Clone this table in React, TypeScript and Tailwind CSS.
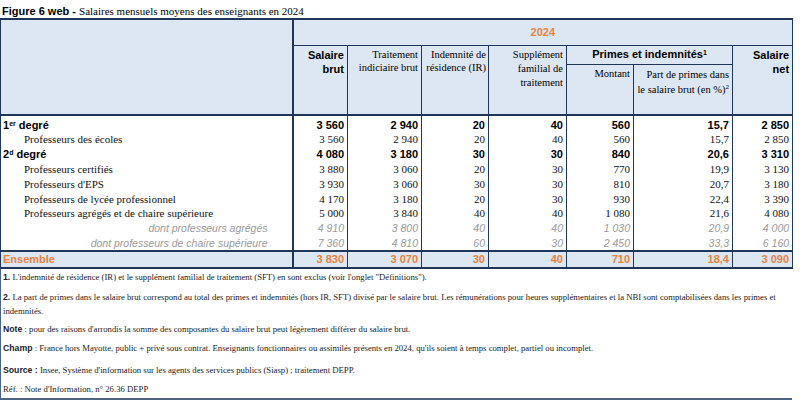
import React from 'react'

type Row = {
  label: React.ReactNode
  kind: 'group' | 'item' | 'dont'
  values: string[]
}

const rows: Row[] = [
  { label: <>1<sup className="text-[7px]">er</sup> degré</>, kind: 'group', values: ['3 560', '2 940', '20', '40', '560', '15,7', '2 850'] },
  { label: 'Professeurs des écoles', kind: 'item', values: ['3 560', '2 940', '20', '40', '560', '15,7', '2 850'] },
  { label: <>2<sup className="text-[7px]">d</sup> degré</>, kind: 'group', values: ['4 080', '3 180', '30', '30', '840', '20,6', '3 310'] },
  { label: 'Professeurs certifiés', kind: 'item', values: ['3 880', '3 060', '20', '30', '770', '19,9', '3 130'] },
  { label: "Professeurs d'EPS", kind: 'item', values: ['3 930', '3 060', '30', '30', '810', '20,7', '3 180'] },
  { label: 'Professeurs de lycée professionnel', kind: 'item', values: ['4 170', '3 180', '20', '30', '930', '22,4', '3 390'] },
  { label: 'Professeurs agrégés et de chaire supérieure', kind: 'item', values: ['5 000', '3 840', '40', '40', '1 080', '21,6', '4 080'] },
  { label: 'dont professeurs agrégés', kind: 'dont', values: ['4 910', '3 800', '40', '40', '1 030', '20,9', '4 000'] },
  { label: 'dont professeurs de chaire supérieure', kind: 'dont', values: ['7 360', '4 810', '60', '30', '2 450', '33,3', '6 160'] },
]

const total = ['3 830', '3 070', '30', '40', '710', '18,4', '3 090']

const arial = 'font-["Liberation_Sans",Arial,sans-serif]'
const times = 'font-["Liberation_Serif","Times_New_Roman",serif]'

function cellStyle(kind: Row['kind']) {
  if (kind === 'group') return `${arial} font-bold text-[11px] text-black`
  if (kind === 'dont') return `${arial} italic text-[10.5px] text-[#9a9a9a]`
  return `${times} text-[11px] text-[#111]`
}

export default function App() {
  return (
    <div className="w-[800px] h-[400px] bg-white overflow-hidden">
      <div className="h-[18px] pl-[2px] pt-[3px] leading-[13px] whitespace-nowrap">
        <span className={`${arial} font-bold text-[11px]`}>Figure 6 web - </span>
        <span className={`${times} text-[11px]`}>Salaires mensuels moyens des enseignants en 2024</span>
      </div>

      <table className="w-[792px] table-fixed border-collapse">
        <colgroup>
          <col className="w-[292px]" />
          <col className="w-[55px]" />
          <col className="w-[74px]" />
          <col className="w-[67px]" />
          <col className="w-[78px]" />
          <col className="w-[67px]" />
          <col className="w-[99px]" />
          <col className="w-[60px]" />
        </colgroup>
        <thead className="bg-[#dde7f3]">
          <tr className="h-[26px]">
            <th rowSpan={3} className="border-t-2 border-b-2 border-l border-r-2 border-[#1f3659]" />
            <th colSpan={7} className={`${arial} border-t-2 border-r border-b-[1.5px] border-[#1f3659] text-[11px] font-bold text-[#e8823c] text-center`}>
              2024
            </th>
          </tr>
          <tr className="h-[19px]">
            <th rowSpan={2} className={`${arial} align-top text-right pr-[3px] pt-[2px] text-[11px] leading-[14px] font-bold border-r border-b-2 border-[#1f3659]`}>
              Salaire<br />brut
            </th>
            <th rowSpan={2} className={`${times} align-top text-right pr-[3px] pt-[2px] text-[10.5px] leading-[13.5px] font-normal border-r border-b-2 border-[#1f3659]`}>
              Traitement<br />indiciaire brut
            </th>
            <th rowSpan={2} className={`${times} align-top text-right pr-[2px] pt-[2px] text-[10.5px] leading-[13.5px] font-normal border-r border-b-2 border-[#1f3659]`}>
              Indemnité de<br />résidence (IR)
            </th>
            <th rowSpan={2} className={`${times} align-top text-right pr-[3px] pt-[2px] text-[10.5px] leading-[14px] font-normal border-r border-b-2 border-[#1f3659]`}>
              Supplément<br />familial de<br />traitement
            </th>
            <th colSpan={2} className={`${arial} text-center text-[11px] font-bold border-r border-b border-[#1f3659] leading-[14px] pb-[1px]`}>
              Primes et indemnités<sup className="text-[7px]">1</sup>
            </th>
            <th rowSpan={2} className={`${arial} align-top text-right pr-[3px] pt-[2px] text-[11px] leading-[14px] font-bold border-r border-b-2 border-[#1f3659]`}>
              Salaire<br />net
            </th>
          </tr>
          <tr className="h-[51px]">
            <th className={`${times} align-top text-right pr-[3px] pt-[2px] text-[10.5px] leading-[14px] font-normal border-r border-b-2 border-[#1f3659]`}>
              Montant
            </th>
            <th className={`${times} align-top text-right pr-[3px] pt-[2px] text-[10.5px] leading-[15px] font-normal border-r border-b-2 border-[#1f3659]`}>
              Part de primes dans<br />le salaire brut (en %)<sup className="text-[7px]">2</sup>
            </th>
          </tr>
        </thead>
        <tbody>
          {rows.map((r, i) => (
            <tr key={i} className={i === 0 ? 'h-[16px]' : 'h-[14.8px]'}>
              <td
                className={`${cellStyle(r.kind)} leading-[14px] whitespace-nowrap border-l border-r-2 border-[#1f3659] ${
                  r.kind === 'group' ? 'pl-[2px] text-left' : r.kind === 'item' ? 'pl-[23px] text-left' : 'text-right pr-[24px]'
                } ${i === 0 ? 'pt-[2px]' : ''}`}
              >
                {r.label}
              </td>
              {r.values.map((v, j) => (
                <td
                  key={j}
                  className={`${cellStyle(r.kind)} leading-[14px] text-right pr-[3px] border-r border-[#1f3659] ${i === 0 ? 'pt-[2px]' : ''}`}
                >
                  {v}
                </td>
              ))}
            </tr>
          ))}
          <tr className="h-[17px] bg-[#dde7f3]">
            <td className={`${arial} font-bold text-[11px] text-[#e8823c] pl-[2px] border-t-2 border-b-2 border-l border-r-2 border-[#1f3659] leading-[14px]`}>
              Ensemble
            </td>
            {total.map((v, j) => (
              <td
                key={j}
                className={`${arial} font-bold text-[11px] text-[#e8823c] text-right pr-[3px] border-t-2 border-b-2 border-r border-[#1f3659] leading-[14px]`}
              >
                {v}
              </td>
            ))}
          </tr>
        </tbody>
      </table>

      <div className={`${times} w-[792px] h-[132px] border-l border-b-[3px] border-[#4a6585] text-[8.7px] leading-[13px] text-[#222] pl-[2px] pt-[2px]`}>
        <p className="mb-[6px]">
          <span className={`${arial} font-bold`}>1.</span> L'indemnité de résidence (IR) et le supplément familial de traitement (SFT) en sont exclus (voir l'onglet "Définitions").
        </p>
        <p className="mb-[5px] leading-[14px]">
          <span className={`${arial} font-bold`}>2.</span> La part de primes dans le salaire brut correspond au total des primes et indemnités (hors IR, SFT) divisé par le salaire brut. Les rémunérations pour heures supplémentaires et la NBI sont comptabilisées dans les primes et indemnités.
        </p>
        <p className="mb-[6px]">
          <span className={`${arial} font-bold`}>Note</span> : pour des raisons d'arrondis la somme des composantes du salaire brut peut légèrement différer du salaire brut.
        </p>
        <p className="mb-[9px]">
          <span className={`${arial} font-bold`}>Champ</span> : France hors Mayotte, public + privé sous contrat. Enseignants fonctionnaires ou assimilés présents en 2024, qu'ils soient à temps complet, partiel ou incomplet.
        </p>
        <p className="mb-[6px]">
          <span className={`${arial} font-bold`}>Source :</span> Insee, Système d'information sur les agents des services publics (Siasp) ; traitement DEPP.
        </p>
        <p>Réf. : Note d'Information, n° 26.36 DEPP</p>
      </div>
    </div>
  )
}
